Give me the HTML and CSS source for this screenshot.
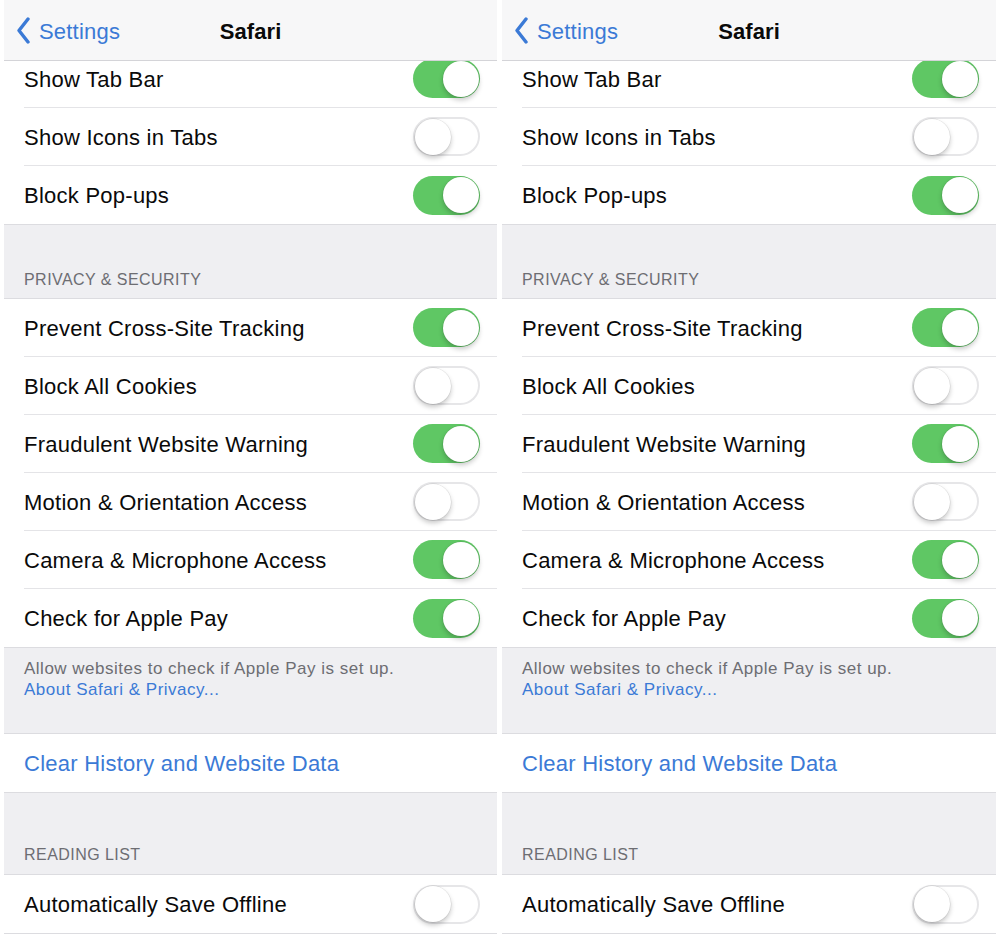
FILE: index.html
```html
<!DOCTYPE html>
<html lang="en">
<head>
<meta charset="utf-8">
<title>Safari Settings</title>
<link rel="stylesheet" href="styles.css">
</head>
<body>
<div class="screens">
  <section class="phone">
    <header class="nav">
      <div class="back">
        <svg class="chev" width="14" height="27" viewBox="0 0 14 27"><path d="M12 2 L3 13.5 L12 25" fill="none" stroke="#3b7ad6" stroke-width="3.4" stroke-linecap="round" stroke-linejoin="round"/></svg>
        <span>Settings</span>
      </div>
      <div class="title">Safari</div>
      <div></div>
    </header>
    <div class="scroll">
      <div class="content">
        <div class="group first">
          <div class="row"><div class="cell"><span class="label">Show Tab Bar</span><span class="switch on"><span class="knob"></span></span></div></div>
          <div class="row"><div class="cell"><span class="label">Show Icons in Tabs</span><span class="switch off"><span class="knob"></span></span></div></div>
          <div class="row"><div class="cell"><span class="label">Block Pop-ups</span><span class="switch on"><span class="knob"></span></span></div></div>
        </div>
        <div class="sec-head h1">PRIVACY &amp; SECURITY</div>
        <div class="group">
          <div class="row"><div class="cell"><span class="label">Prevent Cross-Site Tracking</span><span class="switch on"><span class="knob"></span></span></div></div>
          <div class="row"><div class="cell"><span class="label">Block All Cookies</span><span class="switch off"><span class="knob"></span></span></div></div>
          <div class="row"><div class="cell"><span class="label">Fraudulent Website Warning</span><span class="switch on"><span class="knob"></span></span></div></div>
          <div class="row"><div class="cell"><span class="label">Motion &amp; Orientation Access</span><span class="switch off"><span class="knob"></span></span></div></div>
          <div class="row"><div class="cell"><span class="label">Camera &amp; Microphone Access</span><span class="switch on"><span class="knob"></span></span></div></div>
          <div class="row"><div class="cell"><span class="label">Check for Apple Pay</span><span class="switch on"><span class="knob"></span></span></div></div>
        </div>
        <div class="footer">
          <div>Allow websites to check if Apple Pay is set up.</div>
          <div class="link">About Safari &amp; Privacy...</div>
        </div>
        <div class="group">
          <div class="row"><div class="cell action"><span class="label">Clear History and Website Data</span></div></div>
        </div>
        <div class="sec-head h2">READING LIST</div>
        <div class="group">
          <div class="row"><div class="cell"><span class="label">Automatically Save Offline</span><span class="switch off"><span class="knob"></span></span></div></div>
        </div>
      </div>
    </div>
  </section>

  <section class="phone wide">
    <header class="nav">
      <div class="back">
        <svg class="chev" width="14" height="27" viewBox="0 0 14 27"><path d="M12 2 L3 13.5 L12 25" fill="none" stroke="#3b7ad6" stroke-width="3.4" stroke-linecap="round" stroke-linejoin="round"/></svg>
        <span>Settings</span>
      </div>
      <div class="title">Safari</div>
      <div></div>
    </header>
    <div class="scroll">
      <div class="content">
        <div class="group first">
          <div class="row"><div class="cell"><span class="label">Show Tab Bar</span><span class="switch on"><span class="knob"></span></span></div></div>
          <div class="row"><div class="cell"><span class="label">Show Icons in Tabs</span><span class="switch off"><span class="knob"></span></span></div></div>
          <div class="row"><div class="cell"><span class="label">Block Pop-ups</span><span class="switch on"><span class="knob"></span></span></div></div>
        </div>
        <div class="sec-head h1">PRIVACY &amp; SECURITY</div>
        <div class="group">
          <div class="row"><div class="cell"><span class="label">Prevent Cross-Site Tracking</span><span class="switch on"><span class="knob"></span></span></div></div>
          <div class="row"><div class="cell"><span class="label">Block All Cookies</span><span class="switch off"><span class="knob"></span></span></div></div>
          <div class="row"><div class="cell"><span class="label">Fraudulent Website Warning</span><span class="switch on"><span class="knob"></span></span></div></div>
          <div class="row"><div class="cell"><span class="label">Motion &amp; Orientation Access</span><span class="switch off"><span class="knob"></span></span></div></div>
          <div class="row"><div class="cell"><span class="label">Camera &amp; Microphone Access</span><span class="switch on"><span class="knob"></span></span></div></div>
          <div class="row"><div class="cell"><span class="label">Check for Apple Pay</span><span class="switch on"><span class="knob"></span></span></div></div>
        </div>
        <div class="footer">
          <div>Allow websites to check if Apple Pay is set up.</div>
          <div class="link">About Safari &amp; Privacy...</div>
        </div>
        <div class="group">
          <div class="row"><div class="cell action"><span class="label">Clear History and Website Data</span></div></div>
        </div>
        <div class="sec-head h2">READING LIST</div>
        <div class="group">
          <div class="row"><div class="cell"><span class="label">Automatically Save Offline</span><span class="switch off"><span class="knob"></span></span></div></div>
        </div>
      </div>
    </div>
  </section>
</div>
</body>
</html>
```
FILE: styles.css
```css
* { box-sizing: border-box; }

body {
  margin: 0;
  background: #ffffff;
  font-family: "Liberation Sans", Arial, sans-serif;
  color: #0a0a0a;
}

.screens {
  display: flex;
  gap: 5px;
  padding-left: 4px;
  height: 939px;
  overflow: hidden;
}

.phone {
  width: 493px;
  flex: none;
  display: flex;
  flex-direction: column;
  background: #ffffff;
}

.phone.wide { width: 494px; }

.nav {
  height: 61px;
  flex: none;
  background: #f7f7f8;
  border-bottom: 1px solid #d4d4d8;
  padding-top: 3px;
  display: grid;
  grid-template-columns: 1fr auto 1fr;
  align-items: center;
}

.back {
  display: flex;
  align-items: center;
  gap: 9px;
  padding-left: 12px;
  color: #3b7ad6;
  font-size: 22px;
  letter-spacing: 0.2px;
}

.chev { display: block; margin-top: -2px; }

.title {
  font-size: 22px;
  font-weight: bold;
  color: #0a0a0a;
  letter-spacing: 0.1px;
}

.scroll {
  flex: 1;
  overflow: hidden;
}

.content { margin-top: -11px; }

.group {
  background: #ffffff;
  border-top: 1px solid #dcdce0;
  border-bottom: 1px solid #dcdce0;
}

.group.first { border-top: none; }

.row {
  height: 58px;
  padding-left: 20px;
  display: flex;
}

.cell {
  flex: 1;
  display: flex;
  align-items: center;
  justify-content: space-between;
  padding-right: 17px;
  border-bottom: 1px solid #e4e4e7;
  font-size: 22px;
  letter-spacing: 0.25px;
}

.label { padding-top: 2px; }

.row:last-child .cell { border-bottom: none; }

.cell.action { color: #3b7ad6; }

.sec-head {
  background: #efeff2;
  color: #6d6d72;
  font-size: 16px;
  letter-spacing: 0.45px;
  padding: 0 20px;
  display: flex;
  align-items: flex-end;
}

.sec-head.h1 { height: 73px; padding-bottom: 9px; }
.sec-head.h2 { height: 81px; padding-bottom: 10px; }

.footer {
  background: #efeff2;
  color: #6d6d72;
  font-size: 17px;
  letter-spacing: 0.5px;
  line-height: 21px;
  height: 85px;
  padding: 10px 20px 0;
}

.footer .link { color: #3b7ad6; }

.switch {
  width: 67px;
  height: 39px;
  border-radius: 20px;
  display: flex;
  align-items: center;
  padding: 1.5px;
  flex: none;
}

.switch.on {
  background: #5fc764;
  justify-content: flex-end;
}

.switch.off {
  background: #ffffff;
  box-shadow: inset 0 0 0 2px #e6e6e8;
  justify-content: flex-start;
}

.knob {
  width: 36px;
  height: 36px;
  border-radius: 50%;
  background: #ffffff;
  box-shadow: 0 0 0 0.5px rgba(0, 0, 0, 0.12), 0 3px 5px rgba(0, 0, 0, 0.22);
}
```
